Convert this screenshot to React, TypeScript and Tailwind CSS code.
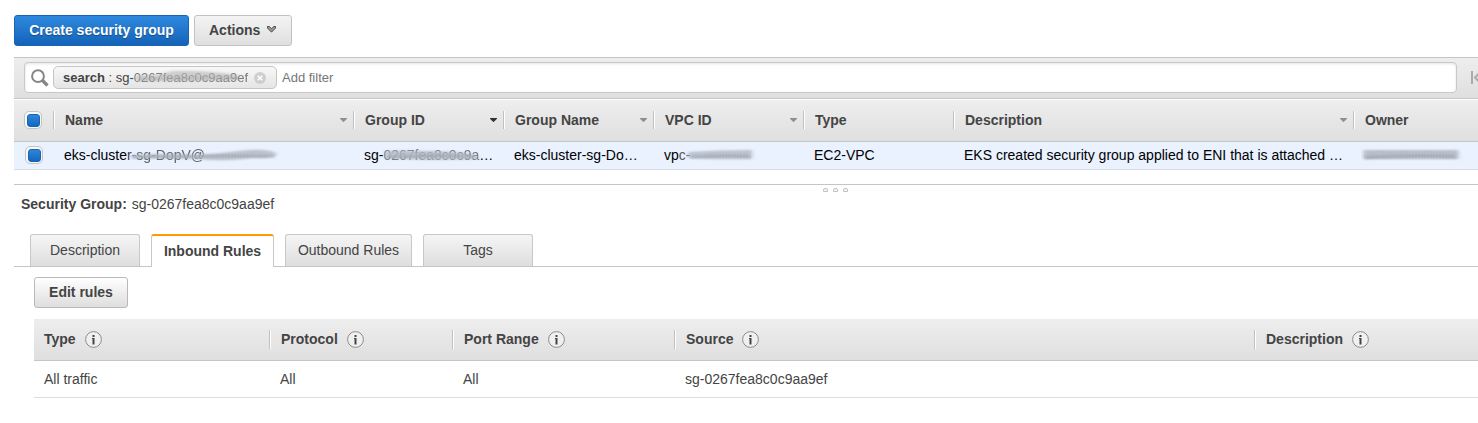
import React from "react";

const barBg = "bg-linear-to-b from-[#eeeeee] to-[#dfdfdf]";

function Divider({ className = "h-[18px]" }: { className?: string }) {
  return <span className={`w-[2px] shrink-0 border-l border-[#c0c0c0] bg-white ${className}`} />;
}

function Caret({ dark = false }: { dark?: boolean }) {
  return (
    <svg width="7" height="4" viewBox="0 0 7 4" className="mr-[6px] mb-px shrink-0">
      <path d="M0 0h7v.8L3.500 4.200 0 .8z" fill={dark ? "#333" : "#8f8f8f"} />
    </svg>
  );
}

function Check() {
  return (
    <span className="flex size-[18px] shrink-0 items-center justify-center rounded-[5px] border border-[#c4c4c4] bg-[#f8f8f8]">
      <span className="size-[13px] rounded-[3px] border border-[#1365ba] bg-linear-to-b from-[#2e85da] to-[#1568bd]" />
    </span>
  );
}

function Info() {
  return (
    <svg width="17" height="17" viewBox="0 0 17 17" className="shrink-0">
      <circle cx="8.5" cy="8.5" r="7.900" fill="#f0f0f0" stroke="#8a8a8a" strokeWidth="1" />
      <path d="M7.500 4h2v2h-2zM7 7h2.500v6.500h-2V8H7z" fill="#444" />
    </svg>
  );
}

function Smudge({ width, d, className = "", id }: { width: number; d: string; className?: string; id: string }) {
  return (
    <svg width={width} height="18" viewBox={`0 0 ${width} 18`} className={`pointer-events-none absolute ${className}`}>
      <defs>
        <filter id={id} x="-10%" y="-30%" width="120%" height="160%">
          <feGaussianBlur stdDeviation="2 1.2" />
        </filter>
        <filter id={`${id}-l`} x="-10%" y="-300%" width="120%" height="700%">
          <feGaussianBlur stdDeviation="1.500 0.8" />
        </filter>
        <pattern id={`${id}-p`} width="3" height="18" patternUnits="userSpaceOnUse">
          <path d="M1 3v12" stroke="#8d949e" strokeWidth="0.6" opacity="0.4" />
        </pattern>
      </defs>
      <path d={d} fill="#b6bdc7" opacity="0.85" filter={`url(#${id})`} />
      <path d={d} fill={`url(#${id}-p)`} opacity="0.5" />
      <path
        d={`M4 11.500Q${width / 2} 9 ${width - 8} 10.500`}
        fill="none"
        stroke="#868d97"
        strokeWidth="1.800"
        opacity="0.5"
        filter={`url(#${id}-l)`}
      />
    </svg>
  );
}

const columns = [
  { label: "Name", width: "w-[300px]", caret: "light" },
  { label: "Group ID", width: "w-[150px]", caret: "dark" },
  { label: "Group Name", width: "w-[150px]", caret: "light" },
  { label: "VPC ID", width: "w-[150px]", caret: "light" },
  { label: "Type", width: "w-[150px]", caret: "" },
  { label: "Description", width: "w-[400px]", caret: "light" },
  { label: "Owner", width: "w-[150px]", caret: "" },
];

const ruleColumns = [
  { label: "Type", value: "All traffic", width: "w-[235px]" },
  { label: "Protocol", value: "All", width: "w-[183px]" },
  { label: "Port Range", value: "All", width: "w-[222px]" },
  { label: "Source", value: "sg-0267fea8c0c9aa9ef", width: "w-[580px]" },
  { label: "Description", value: "", width: "w-[224px]" },
];

const tabBase =
  "flex h-[32px] items-center justify-center rounded-t-[3px] border border-b-0 border-[#c8c8c8] bg-linear-to-b from-[#f5f5f5] to-[#dedede] pb-px";

export default function App() {
  return (
    <div className="h-[423px] w-full overflow-hidden bg-white font-['Liberation_Sans',Arial,sans-serif] text-[14px] leading-[18px] text-[#444]">
      <div className="flex gap-[5px] pt-[15px] pl-[14px]">
        <button className="h-[31px] w-[175px] rounded-[3px] border border-[#1766b5] bg-linear-to-b from-[#2e89de] to-[#1363b8] pb-px font-bold whitespace-nowrap text-white [text-shadow:0_1px_1px_#0005]">
          Create security group
        </button>
        <button className="flex h-[31px] w-[98px] items-center rounded-[3px] border border-[#c2c2c2] bg-linear-to-b from-[#f4f4f4] to-[#dfdfdf] pb-px pl-[14px] font-bold">
          Actions
          <svg width="11" height="7" viewBox="0 0 11 7" className="mb-px ml-[6px]">
            <path d="M1.500 .5h1.800l2.200 2.200L7.700 .5h1.800v1.600L5.500 6.200 1.500 2.100z" fill="#999" stroke="#333" strokeWidth=".8" />
          </svg>
        </button>
      </div>

      <div className="mt-[11px] ml-[14px]">
        <div className={`flex h-[42px] items-center overflow-hidden border-y border-[#c5c5c5] pb-px pl-[10px] ${barBg}`}>
          <div className="flex h-[31px] w-[1433px] shrink-0 items-center rounded-[4px] border border-[#c8c8c8] bg-white shadow-[inset_0_1px_3px_#0000001c]">
            <svg width="18" height="18" viewBox="0 0 18 18" fill="none" className="mt-px ml-[6px]">
              <circle cx="7" cy="7.200" r="5.900" stroke="#858585" strokeWidth="2" />
              <path d="M11.500 11.500l5 5" stroke="#858585" strokeWidth="3.200" />
            </svg>
            <div className="relative ml-[4px] flex h-[23px] w-[224px] items-center rounded-[5px] border border-[#c5c5c5] bg-linear-to-b from-[#f8f8f8] to-[#e5e5e5] pl-[9px] text-[13px] whitespace-nowrap">
              <b>search</b>&nbsp;: sg-<span className="text-[#777] blur-[0.5px]">0267fea8c0c9aa9ef</span>
              <Smudge id="s0" width={112} className="top-[1px] left-[80px] opacity-75 grayscale" d="M2 7Q26 8 38 3Q70 2 104 7V12Q60 14 2 13Z" />
              <svg width="12" height="12" viewBox="0 0 12 12" className="absolute top-[5px] left-[200px]">
                <circle cx="6" cy="6" r="6" fill="#cecece" />
                <path d="M3.700 3.700l4.600 4.600m0-4.600L3.700 8.300" stroke="#fff" strokeWidth="1.500" />
              </svg>
            </div>
            <span className="ml-[5px] text-[13px] text-[#757575]">Add filter</span>
          </div>
          <svg width="12" height="13" viewBox="0 0 12 13" className="ml-[14px] shrink-0">
            <path d="M1 0v13" stroke="#aaa" strokeWidth="2" />
            <path d="M9 1.500L4 6.500l5 5" fill="none" stroke="#aaa" strokeWidth="2" />
          </svg>
        </div>

        <div className={`flex h-[43px] items-center overflow-hidden border-t border-b border-t-white border-b-[#c5c5c5] pb-px font-bold ${barBg}`}>
          <div className="flex w-[39px] shrink-0 pl-[10px]"><Check /></div>
          {columns.map((c) => (
            <div key={c.label} className={`flex shrink-0 items-center ${c.width}`}>
              <Divider />
              <span className="ml-[10px] flex-1">{c.label}</span>
              {c.caret && <Caret dark={c.caret === "dark"} />}
            </div>
          ))}
        </div>

        <div className="flex h-[28px] items-center overflow-hidden border-b border-[#d9dce2] bg-[#eaf2ff] pb-px whitespace-nowrap text-black">
          <div className="flex w-[50px] shrink-0 pl-[11px]"><Check /></div>
          <div className="relative w-[300px] shrink-0">
            eks-cluste<span className="text-[#444]">r</span>
            <span className="inline-block text-[#5d636c] blur-[0.5px]">-sg-DopV@</span>
            <Smudge id="s1" width={154} className="top-0 left-[65px]" d="M2 9Q30 7 66 9Q94 7 120 4Q142 3 148 8Q144 13 124 12Q92 16 70 13Q35 12 2 12Z" />
          </div>
          <div className="relative w-[150px] shrink-0">
            sg-<span className="inline-block text-[#6d747e] blur-[0.5px]">0267fea8c0c9a</span>…
            <Smudge id="s2" width={100} className="top-0 left-[18px]" d="M3 5Q35 4 72 6Q88 7 95 10V13Q45 15 3 12Z" />
          </div>
          <div className="w-[150px] shrink-0">eks-cluster-sg-Do…</div>
          <div className="relative w-[150px] shrink-0">
            vp<span className="text-[#555]">c-</span>
            <Smudge id="s3" width={72} className="top-0 left-[22px]" d="M2 6Q34 4 66 4L66 13Q30 14 3 12Z" />
          </div>
          <div className="w-[150px] shrink-0">EC2-VPC</div>
          <div className="w-[397px] shrink-0">EKS created security group applied to ENI that is attached …</div>
          <div className="relative h-[18px] w-[110px] shrink-0">
            <Smudge id="s4" width={102} className="top-0 left-0" d="M3 4H97V13H3Z" />
            <Smudge id="s5" width={102} className="top-0 left-0 opacity-50" d="M3 5H97V13H3Z" />
          </div>
        </div>

        <div className="mt-[14px] flex h-[10px] justify-center gap-[5px] border-t border-[#c5c5c5] pt-[3px] pl-[178px]">
          {[0, 1, 2].map((n) => (
            <span key={n} className="h-[4px] w-[5px] rounded-t-[2px] border border-[#c4c4c4] bg-[#f4f4f4]" />
          ))}
        </div>
      </div>

      <div className="mt-px pl-[21px]">
        <b>Security Group:</b> <span className="ml-px">sg-0267fea8c0c9aa9ef</span>
      </div>

      <div className="mt-[21px] ml-[14px] flex h-[33px] items-start border-b border-[#c5c5c5] pl-[16px]">
        <div className={`w-[110px] ${tabBase}`}>Description</div>
        <div className="ml-[11px] flex h-[33px] w-[123px] items-center justify-center rounded-t-[3px] border-x border-t-2 border-x-[#c8c8c8] border-t-[#ff9900] bg-white pb-px font-bold">
          Inbound Rules
        </div>
        <div className={`ml-[11px] w-[127px] ${tabBase}`}>Outbound Rules</div>
        <div className={`ml-[11px] w-[110px] ${tabBase}`}>Tags</div>
      </div>

      <div className="pt-[10px] pl-[34px]">
        <button className="block h-[31px] w-[94px] rounded-[3px] border border-[#b9b9b9] bg-linear-to-b from-white to-[#dedede] pb-px font-bold">
          Edit rules
        </button>
        <div className={`mt-[11px] flex h-[42px] items-center overflow-hidden border-b border-[#c5c5c5] font-bold ${barBg}`}>
          {ruleColumns.map((c, i) => (
            <div key={c.label} className={`flex h-[19px] shrink-0 items-center ${c.width}`}>
              {i > 0 && <Divider className="h-[19px]" />}
              <span className="mr-[9px] mb-px ml-[10px]">{c.label}</span>
              <Info />
            </div>
          ))}
        </div>
        <div className="flex h-[37px] items-center overflow-hidden border-b border-[#dddddd]">
          {ruleColumns.map((c, i) => (
            <div key={c.label} className={`shrink-0 ${i > 0 ? "pl-[11px]" : "pl-[10px]"} ${c.width}`}>{c.value}</div>
          ))}
        </div>
      </div>
    </div>
  );
}
